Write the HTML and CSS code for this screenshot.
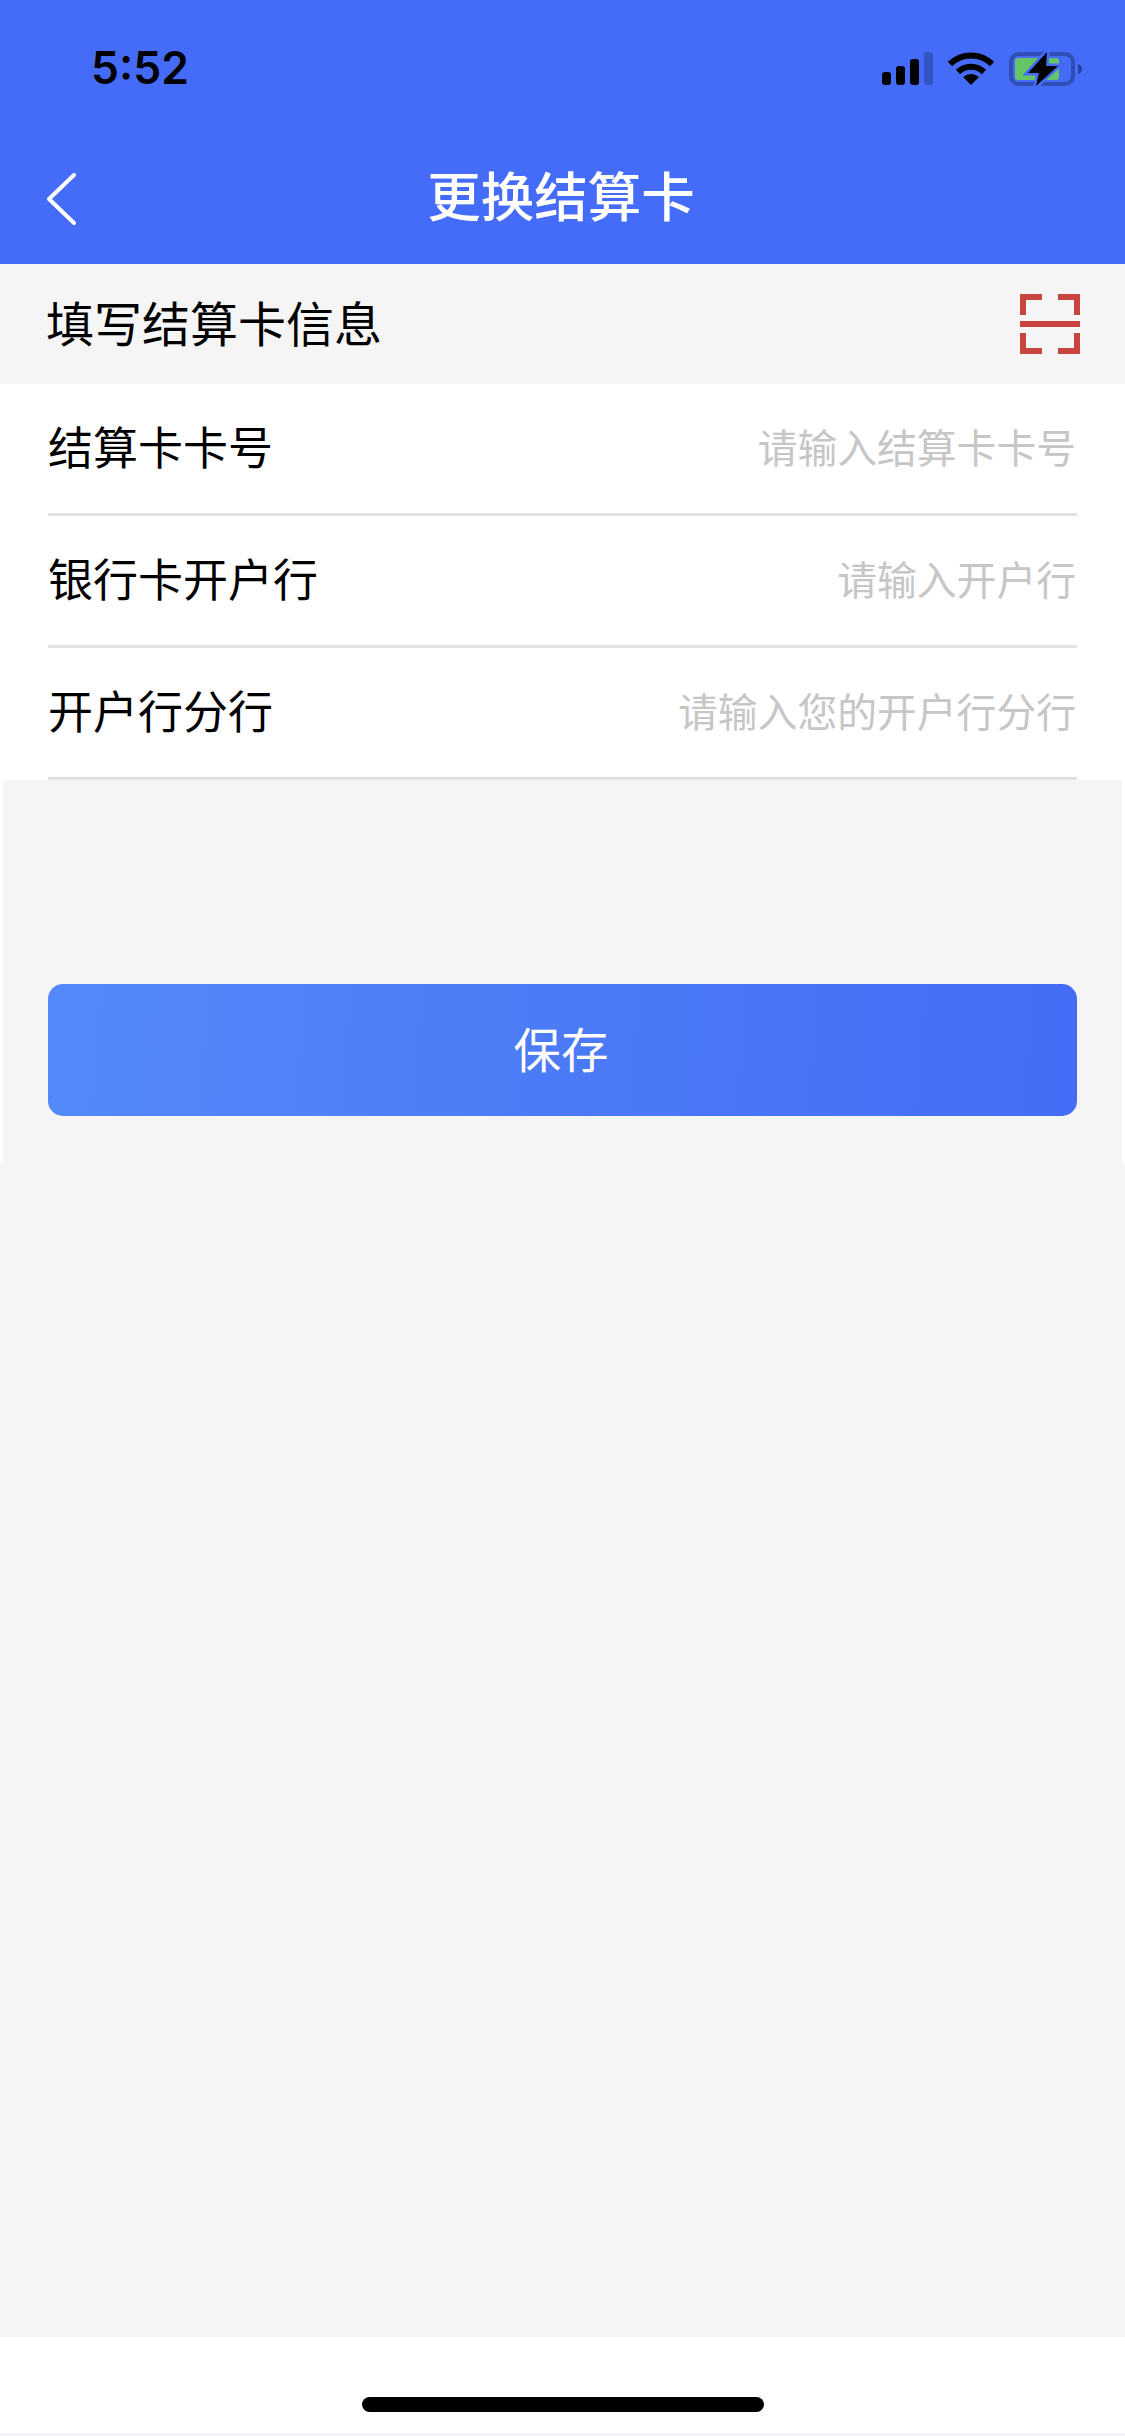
FILE: index.html
```html
<!DOCTYPE html>
<html lang="zh-CN">
<head>
    <meta charset="UTF-8">
    <meta name="viewport" content="width=device-width, initial-scale=1.0">
    <title>更换结算卡</title>
    <link rel="stylesheet" href="styles.css">
</head>
<body>
    <div class="app">
        <header class="header">
            <div class="status-bar">
                <span class="time">5:52</span>
                <div class="status-icons">
                    <svg class="icon-signal" width="51" height="33" viewBox="0 0 51 33">
                        <rect x="0" y="20" width="9" height="13" rx="3" fill="#000"/>
                        <rect x="14" y="14" width="9" height="19" rx="3" fill="#000"/>
                        <rect x="28" y="7" width="9" height="26" rx="3" fill="#000"/>
                        <rect x="42" y="0" width="9" height="33" rx="3" fill="#3454c3"/>
                    </svg>
                    <svg class="icon-wifi" width="46" height="33" viewBox="0 0 46 33">
                        <path d="M2 12 A30 30 0 0 1 44 12" fill="none" stroke="#000" stroke-width="6"/>
                        <path d="M10 20 A18.5 18.5 0 0 1 36 20" fill="none" stroke="#000" stroke-width="6"/>
                        <path d="M23 33 L15 25 Q23 19 31 25 Z" fill="#000"/>
                    </svg>
                    <svg class="icon-battery" width="74" height="34" viewBox="0 0 74 34">
                        <rect x="2" y="2" width="62" height="30" rx="8" fill="none" stroke="#2f4fb5" stroke-width="4"/>
                        <rect x="6" y="6" width="44" height="22" rx="3" fill="#64c466"/>
                        <path d="M69 12 Q73 13 73 17 Q73 21 69 22 Z" fill="#2243a8"/>
                        <path d="M38 0 L19 21 L30 21 L27 34 L49 14 L37 14 Z" fill="#000" stroke="#456cf8" stroke-width="5" paint-order="stroke"/>
                    </svg>
                </div>
            </div>
            <div class="nav">
                <svg class="nav-back" width="30" height="54" viewBox="0 0 30 54">
                    <path d="M27 2 L2 26 L27 50" fill="none" stroke="#fff" stroke-width="4" stroke-linecap="round" stroke-linejoin="round"/>
                </svg>
                <h1 class="nav-title">更换结算卡</h1>
            </div>
        </header>

        <div class="section-bar">
            <span class="section-title">填写结算卡信息</span>
            <svg class="scan-icon" width="60" height="60" viewBox="0 0 60 60">
                <path d="M3 21 V3 H22 M38 3 H57 V21 M3 39 V57 H22 M38 57 H57 V39" fill="none" stroke="#c8443f" stroke-width="6"/>
                <path d="M0 30 H60" fill="none" stroke="#c8443f" stroke-width="6"/>
            </svg>
        </div>

        <div class="form">
            <div class="row">
                <span class="row-label">结算卡卡号</span>
                <span class="row-hint">请输入结算卡卡号</span>
            </div>
            <div class="row">
                <span class="row-label">银行卡开户行</span>
                <span class="row-hint">请输入开户行</span>
            </div>
            <div class="row">
                <span class="row-label">开户行分行</span>
                <span class="row-hint">请输入您的开户行分行</span>
            </div>
        </div>

        <div class="save-panel">
            <button class="save-btn" type="button">保存</button>
        </div>

        <div class="filler"></div>

        <div class="home-bar">
            <div class="home-indicator"></div>
        </div>
    </div>
</body>
</html>
```

FILE: styles.css
```css
* {
    box-sizing: border-box;
}

html, body {
    margin: 0;
    padding: 0;
}

body {
    background-color: #fff;
    font-family: "Noto Sans CJK SC", "Noto Sans", sans-serif;
    color: #000;
}

.app {
    width: 1125px;
    height: 2436px;
    display: flex;
    flex-direction: column;
    overflow: hidden;
}

.header {
    height: 264px;
    background-color: #456cf8;
}

.status-bar {
    height: 136px;
    padding: 1px 42px 0 91px;
    display: flex;
    justify-content: space-between;
    align-items: center;
}

.time {
    font-family: Inter, "Liberation Sans", sans-serif;
    font-size: 44.5px;
    font-weight: 600;
    line-height: 1;
}

.status-icons {
    display: flex;
    align-items: center;
    gap: 15px;
}

.nav {
    height: 128px;
    padding: 0 47px;
    display: grid;
    grid-template-columns: 1fr auto 1fr;
    align-items: center;
}

.nav-title {
    margin: 0 0 12px -3px;
    font-size: 53.5px;
    font-weight: 500;
    line-height: 1.4;
    color: #fff;
}

.section-bar {
    height: 120px;
    padding: 0 45px 0 46px;
    background-color: #f5f5f5;
    display: flex;
    justify-content: space-between;
    align-items: center;
}

.section-title {
    font-size: 48px;
    margin-bottom: 6px;
}

.form {
    padding: 0 48px;
    background-color: #fff;
}

.row {
    height: 132px;
    padding-bottom: 6px;
    border-bottom: 3px solid #e2e2e2;
    display: flex;
    justify-content: space-between;
    align-items: center;
}

.row-label {
    font-size: 45px;
}

.row-hint {
    font-size: 39.8px;
    color: #c6c6c6;
    margin-right: 1px;
}

.save-panel {
    margin: 0 3px;
    padding: 204px 45px 48px;
    background-color: #f5f5f5;
}

.save-btn {
    display: block;
    width: 100%;
    height: 132px;
    padding: 0 3px 6px 0;
    border: none;
    border-radius: 15px;
    background: linear-gradient(95deg, #5389f8 0%, #456cf6 100%);
    color: #fff;
    font-family: inherit;
    font-size: 47.5px;
    cursor: pointer;
}

.filler {
    flex: 1;
    background-color: #f5f5f5;
}

.home-bar {
    height: 99px;
    padding-top: 60px;
    background-color: #fff;
    border-bottom: 3px solid #f2f2f7;
}

.home-indicator {
    width: 402px;
    height: 15px;
    margin: 0 auto;
    border-radius: 8px;
    background-color: #000;
}
```
